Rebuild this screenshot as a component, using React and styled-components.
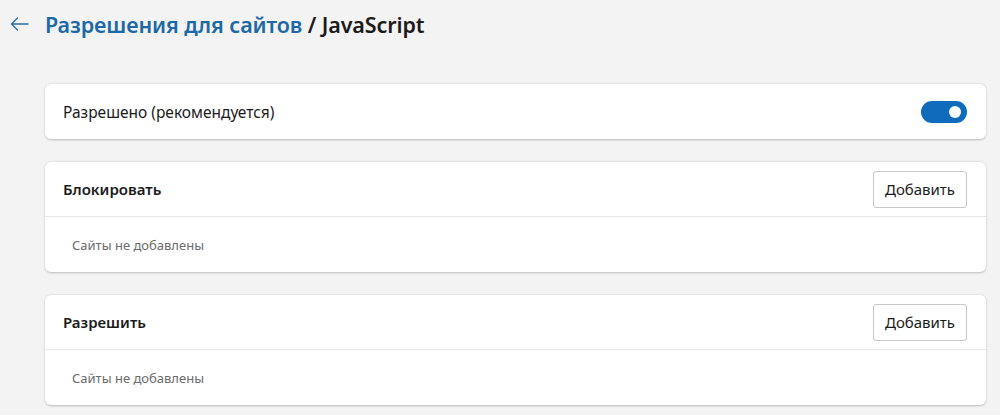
import React from "react";
import styled, { createGlobalStyle } from "styled-components";

const Global = createGlobalStyle`
  html, body { margin: 0; padding: 0; background: #f3f3f3; }
  body { font-family: "Noto Sans", "Open Sans", sans-serif; color: #1b1b1b; }
`;

const Page = styled.div`
  width: 1000px;
  height: 415px;
  overflow: hidden;
  box-sizing: border-box;
  padding: 6px 14px 0 10px;
`;

const Header = styled.div`
  display: flex;
  align-items: center;
  height: 36px;
`;

const BackButton = styled.button`
  width: 35px;
  height: 36px;
  padding: 0;
  border: 0;
  background: transparent;
  display: flex;
  align-items: center;
  justify-content: flex-start;
  color: #2b6aa3;
  cursor: pointer;
`;

const Title = styled.h1`
  margin: 0;
  font-size: 21.5px;
  font-weight: 600;
  letter-spacing: -0.1px;
  color: #1b1b1b;
`;

const Crumb = styled.span`
  color: #1d69a6;
`;

const Content = styled.div`
  margin-left: 35px;
  margin-top: 42px;
  display: flex;
  flex-direction: column;
  gap: 23px;
`;

const Card = styled.section`
  background: #fff;
  border-radius: 6px;
  box-shadow: 0 0.5px 2px rgba(0, 0, 0, 0.18), 0 1px 3px rgba(0, 0, 0, 0.06);
`;

const Row = styled.div`
  display: flex;
  align-items: center;
  justify-content: space-between;
  height: ${(p) => p.$h || 55}px;
  padding: 0 19px 0 18px;
  box-sizing: border-box;
  border-bottom: ${(p) => (p.$divider ? "1px solid #e6e6e6" : "none")};
`;

const Label = styled.span`
  font-size: ${(p) => (p.$bold ? 15 : 15.5)}px;
  font-weight: ${(p) => (p.$bold ? 600 : 400)};
  color: #1b1b1b;
`;

const Empty = styled.div`
  padding: 0 27px;
  height: 55px;
  display: flex;
  align-items: center;
  font-size: 13px;
  color: #6b6b6b;
`;

const Toggle = styled.div`
  width: 46px;
  height: 22px;
  border-radius: 11px;
  background: #0f6cbd;
  position: relative;
  &::after {
    content: "";
    position: absolute;
    right: 6px;
    top: 5px;
    width: 12px;
    height: 12px;
    border-radius: 50%;
    background: #fff;
  }
`;

const AddButton = styled.button`
  height: 37px;
  width: 94px;
  padding: 0;
  background: #fff;
  border: 1px solid #c8c8c8;
  border-radius: 3px;
  font-family: inherit;
  font-size: 15px;
  color: #1b1b1b;
`;

const ListCard = ({ title }) => (
  <Card>
    <Row $divider>
      <Label $bold>{title}</Label>
      <AddButton>Добавить</AddButton>
    </Row>
    <Empty>Сайты не добавлены</Empty>
  </Card>
);

export default function App() {
  return (
    <>
      <Global />
      <Page>
        <Header>
          <BackButton aria-label="Назад">
            <svg width="19" height="14" viewBox="0 0 19 14" fill="none" stroke="currentColor" strokeWidth="1.3" strokeLinecap="round" strokeLinejoin="round">
              <path d="M18 7H1.5M7.5 1 1.5 7l6 6" />
            </svg>
          </BackButton>
          <Title>
            <Crumb>Разрешения для сайтов</Crumb> / JavaScript
          </Title>
        </Header>
        <Content>
          <Card>
            <Row $h={55}>
              <Label>Разрешено (рекомендуется)</Label>
              <Toggle />
            </Row>
          </Card>
          <ListCard title="Блокировать" />
          <ListCard title="Разрешить" />
        </Content>
      </Page>
    </>
  );
}
